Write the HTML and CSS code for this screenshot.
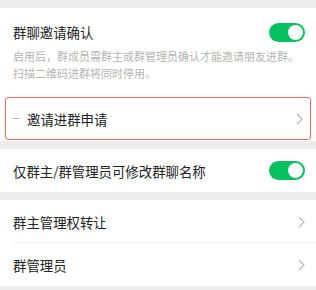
FILE: index.html
```html
<!DOCTYPE html>
<html lang="zh">
<head>
<meta charset="utf-8">
<link rel="stylesheet" href="styles.css">
</head>
<body>
<div class="page">
  <section class="group first">
    <div class="row toggle-row">
      <span class="label">群聊邀请确认</span>
      <span class="switch"><span class="knob"></span></span>
    </div>
    <p class="desc">启用后，群成员需群主或群管理员确认才能邀请朋友进群。扫描二维码进群将同时停用。</p>
    <div class="highlight">
      <div class="row link-row">
        <span class="dash"></span>
        <span class="label">邀请进群申请</span>
        <svg class="chev" width="7" height="12" viewBox="0 0 7 12"><path d="M1 1l5 5-5 5" fill="none" stroke="#b9b9b9" stroke-width="1.3"/></svg>
      </div>
    </div>
  </section>
  <section class="group">
    <div class="row simple">
      <span class="label">仅群主/群管理员可修改群聊名称</span>
      <span class="switch"><span class="knob"></span></span>
    </div>
  </section>
  <section class="group">
    <div class="row simple divided">
      <span class="label">群主管理权转让</span>
      <svg class="chev" width="7" height="12" viewBox="0 0 7 12"><path d="M1 1l5 5-5 5" fill="none" stroke="#b9b9b9" stroke-width="1.3"/></svg>
    </div>
    <div class="row simple">
      <span class="label">群管理员</span>
      <svg class="chev" width="7" height="12" viewBox="0 0 7 12"><path d="M1 1l5 5-5 5" fill="none" stroke="#b9b9b9" stroke-width="1.3"/></svg>
    </div>
  </section>
</div>
</body>
</html>
```
FILE: styles.css
```css
html, body {
  margin: 0;
  padding: 0;
  background: #ededed;
}
body {
  font-family: "Noto Sans CJK SC", "Noto Sans", sans-serif;
  width: 316px;
  height: 290px;
  overflow: hidden;
}
.page {
  display: flex;
  flex-direction: column;
  gap: 8px;
  padding-top: 8px;
}
.group {
  background: #fff;
}
.first {
  padding-bottom: 1px;
}
.row {
  display: flex;
  align-items: center;
  padding: 0 11px 0 13px;
}
.label {
  flex: 1;
  font-size: 13.4px;
  color: #222;
  line-height: 20px;
}
.toggle-row {
  padding-top: 14px;
  padding-bottom: 6px;
}
.simple {
  height: 43px;
}
.divided {
  position: relative;
}
.divided::after {
  content: "";
  position: absolute;
  left: 13px;
  right: 0;
  bottom: 0;
  height: 1px;
  background: #ececec;
}
.switch {
  width: 36px;
  height: 19px;
  border-radius: 10px;
  background: #07c160;
  display: flex;
  align-items: center;
  justify-content: flex-end;
  padding-right: 2px;
  box-sizing: border-box;
}
.knob {
  width: 15px;
  height: 15px;
  border-radius: 50%;
  background: #fff;
}
.desc {
  margin: 0;
  padding: 0 13px 0 13px;
  font-size: 11px;
  line-height: 17px;
  color: #b4b4b4;
}
.highlight {
  margin: 15px 5px 0 5px;
  border: 1.5px solid #f26b61;
  border-radius: 3px;
}
.link-row {
  height: 41px;
  padding: 0 7px 0 7px;
}
.dash {
  width: 6px;
  height: 1px;
  background: #b4b4b4;
  margin-right: 8px;
}
.chev {
  flex: none;
}
```
